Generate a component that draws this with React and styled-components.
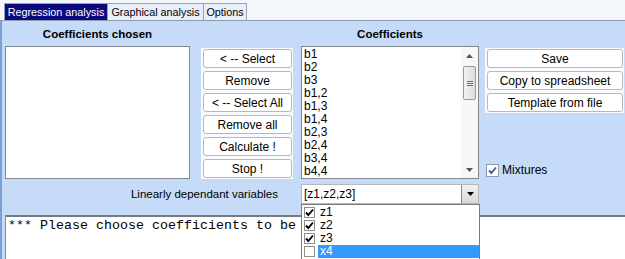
import React from "react";
import styled, { createGlobalStyle } from "styled-components";

const GlobalStyle = createGlobalStyle`
  body {
    margin: 0;
    font-family: "Liberation Sans", Arial, sans-serif;
    font-size: 11px;
    color: #000;
  }
`;

const Window = styled.div`
  width: 625px;
  height: 259px;
  overflow: hidden;
  display: flex;
  flex-direction: column;
  background: #f3f6fb;
`;

const TabStrip = styled.div`
  display: flex;
  align-items: flex-end;
  height: 21px;
  padding-left: 4px;
  box-sizing: border-box;
  border-bottom: 1px solid #8d9ab0;
`;

const Tab = styled.div`
  width: ${(p) => p.w}px;
  height: 17px;
  box-sizing: border-box;
  display: flex;
  align-items: center;
  justify-content: center;
  white-space: nowrap;
  font-size: 10.8px;
  border: 1px solid #9aa3b0;
  border-bottom: none;
  margin-right: -1px;
  background: ${(p) => (p.active ? "#0a0a80" : "#e9eff8")};
  color: ${(p) => (p.active ? "#fff" : "#000")};
`;

const Panel = styled.div`
  position: relative;
  flex: 1;
  display: flex;
  flex-direction: column;
  background: #c6dbf7;
  border-left: 2px solid #7d9fd8;
`;

const TopRow = styled.div`
  display: flex;
  padding-left: 3px;
  height: 158px;
`;

const Column = styled.div`
  display: flex;
  flex-direction: column;
  width: ${(p) => p.w}px;
  margin-left: ${(p) => p.gap || 0}px;
`;

const Header = styled.div`
  height: 25px;
  display: flex;
  align-items: center;
  justify-content: center;
  font-weight: bold;
  font-size: 11.5px;
`;

const ListBox = styled.div`
  height: 133px;
  box-sizing: border-box;
  border: 1px solid #828790;
  background: #fff;
  display: flex;
`;

const ListItems = styled.div`
  flex: 1;
  padding: 1px 0 0 2px;
  font-size: 12px;
`;

const ListItem = styled.div`
  height: 13px;
  line-height: 13px;
`;

const ScrollBar = styled.div`
  width: 17px;
  display: flex;
  flex-direction: column;
  align-items: center;
  background: #f7f7f7;
`;

const ScrollArrow = styled.div`
  height: 17px;
  width: 17px;
  display: flex;
  align-items: center;
  justify-content: center;
`;

const Thumb = styled.div`
  width: 13px;
  height: 34px;
  margin-top: 2px;
  box-sizing: border-box;
  border: 1px solid #9a9a9a;
  border-radius: 2px;
  background: linear-gradient(to right, #f2f2f2, #dcdcdc);
  display: flex;
  flex-direction: column;
  align-items: center;
  justify-content: center;
  gap: 1px;
`;

const Grip = styled.div`
  width: 6px;
  height: 1px;
  background: #6f6f6f;
`;

const Spacer = styled.div`
  flex: 1;
`;

const ButtonStack = styled.div`
  margin-top: 27px;
  display: flex;
  flex-direction: column;
  gap: 3px;
  padding: 1px 1px 1px 2px;
  background: #f8fafd;
`;

const Button = styled.div`
  height: 19px;
  box-sizing: border-box;
  border: 1px solid #b8b8b8;
  border-radius: 3px;
  background: #fff;
  display: flex;
  align-items: center;
  justify-content: center;
  font-size: 12px;
`;

const CheckRow = styled.div`
  margin-top: auto;
  margin-bottom: 2px;
  display: flex;
  align-items: center;
  gap: 3px;
  font-size: 12px;
  padding-left: 1px;
`;

const CheckBox = styled.div`
  width: ${(p) => p.size}px;
  height: ${(p) => p.size}px;
  box-sizing: border-box;
  border: 1px solid ${(p) => (p.blue ? "#8a9bb5" : "#8f8f8f")};
  background: #fff;
  display: flex;
  align-items: center;
  justify-content: center;
  flex-shrink: 0;
`;

const DropRow = styled.div`
  display: flex;
  align-items: center;
  margin-top: 5px;
  padding-left: 3px;
  height: 20px;
`;

const DropLabel = styled.div`
  width: 273px;
  text-align: right;
  font-size: 11.5px;
`;

const Combo = styled.div`
  margin-left: 23px;
  width: 178px;
  height: 20px;
  box-sizing: border-box;
  border: 1px solid #b3b6bc;
  background: #fff;
  display: flex;
  align-items: center;
  font-size: 12px;
`;

const ComboText = styled.div`
  flex: 1;
  padding-left: 2px;
`;

const ComboButton = styled.div`
  width: 16px;
  height: 18px;
  border-left: 1px solid #8a8a8a;
  background: linear-gradient(#f0f0f0, #d8d8d8);
  display: flex;
  align-items: center;
  justify-content: center;
`;

const Memo = styled.div`
  margin-top: 11px;
  margin-left: 3px;
  flex: 1;
  background: #fff;
  border-top: 2px solid #7a7a7a;
  border-left: 1px solid #8a8a8a;
  font-family: "Liberation Mono", "Courier New", monospace;
  font-size: 13.33px;
  line-height: 15px;
  padding: 1px 0 0 2px;
  white-space: pre;
`;

const Popup = styled.div`
  position: absolute;
  left: 299px;
  top: 183px;
  width: 179px;
  height: 60px;
  box-sizing: border-box;
  border: 1px solid #7c7c7c;
  border-bottom: none;
  background: #fff;
  padding-top: 1px;
`;

const PopRow = styled.div`
  display: flex;
  align-items: center;
  height: 13px;
  padding-left: 2px;
  font-size: 12px;
`;

const PopLabel = styled.div`
  flex: 1;
  height: 13px;
  margin-left: 3px;
  box-sizing: border-box;
  line-height: 11px;
  padding-left: 1px;
  background: ${(p) => (p.selected ? "#3399ff" : "transparent")};
  color: ${(p) => (p.selected ? "#fff" : "#000")};
  border: 1px ${(p) => (p.selected ? "dotted #c27a2a" : "solid transparent")};
`;

const Check = ({ color = "#000" }) => (
  <svg width="9" height="9" viewBox="0 0 9 9">
    <path d="M1 4.5 L3.3 7 L8 1.5" fill="none" stroke={color} strokeWidth="1.9" />
  </svg>
);

const Arrow = ({ up, color = "#555" }) => (
  <svg width="7" height="4" viewBox="0 0 7 4">
    <path d={up ? "M0 4 L3.5 0 L7 4 Z" : "M0 0 L7 0 L3.5 4 Z"} fill={color} />
  </svg>
);

const coefficients = ["b1", "b2", "b3", "b1,2", "b1,3", "b1,4", "b2,3", "b2,4", "b3,4", "b4,4"];
const middleButtons = ["< -- Select", "Remove", "< -- Select All", "Remove all", "Calculate !", "Stop !"];
const rightButtons = ["Save", "Copy to spreadsheet", "Template from file"];
const variables = [
  { name: "z1", checked: true },
  { name: "z2", checked: true },
  { name: "z3", checked: true },
  { name: "x4", checked: false, selected: true },
];

export default function App() {
  return (
    <Window>
      <GlobalStyle />
      <TabStrip>
        <Tab w={104} active>Regression analysis</Tab>
        <Tab w={97}>Graphical analysis</Tab>
        <Tab w={44}>Options</Tab>
      </TabStrip>
      <Panel>
        <TopRow>
          <Column w={185}>
            <Header>Coefficients chosen</Header>
            <ListBox />
          </Column>
          <Column w={92} gap={11}>
            <ButtonStack>
              {middleButtons.map((b) => (
                <Button key={b}>{b}</Button>
              ))}
            </ButtonStack>
          </Column>
          <Column w={178} gap={8}>
            <Header>Coefficients</Header>
            <ListBox>
              <ListItems>
                {coefficients.map((c) => (
                  <ListItem key={c}>{c}</ListItem>
                ))}
              </ListItems>
              <ScrollBar>
                <ScrollArrow>
                  <Arrow up />
                </ScrollArrow>
                <Thumb>
                  <Grip />
                  <Grip />
                  <Grip />
                </Thumb>
                <Spacer />
                <ScrollArrow>
                  <Arrow />
                </ScrollArrow>
              </ScrollBar>
            </ListBox>
          </Column>
          <Column w={139} gap={6}>
            <ButtonStack>
              {rightButtons.map((b) => (
                <Button key={b}>{b}</Button>
              ))}
            </ButtonStack>
            <CheckRow>
              <CheckBox size={13} blue>
                <Check color="#3c5fa8" />
              </CheckBox>
              Mixtures
            </CheckRow>
          </Column>
        </TopRow>
        <DropRow>
          <DropLabel>Linearly dependant variables</DropLabel>
          <Combo>
            <ComboText>[z1,z2,z3]</ComboText>
            <ComboButton>
              <Arrow color="#000" />
            </ComboButton>
          </Combo>
        </DropRow>
        <Memo>*** Please choose coefficients to be</Memo>
        <Popup>
          {variables.map((v) => (
            <PopRow key={v.name}>
              <CheckBox size={11}>{v.checked && <Check />}</CheckBox>
              <PopLabel selected={v.selected}>{v.name}</PopLabel>
            </PopRow>
          ))}
        </Popup>
      </Panel>
    </Window>
  );
}
